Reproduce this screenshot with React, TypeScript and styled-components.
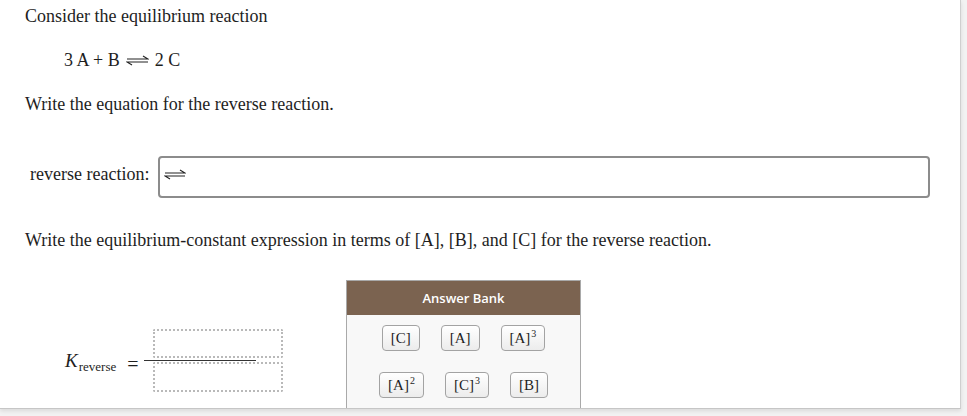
import React from "react";
import styled, { createGlobalStyle } from "styled-components";

const Global = createGlobalStyle`
  html, body { margin: 0; padding: 0; background: #f2f2f2; }
  body { font-family: "Liberation Serif", "Times New Roman", serif; color: #1e1e1e; }
`;

const Page = styled.div`
  width: 967px;
  height: 416px;
  overflow: hidden;
  background: #f2f2f2;
`;

const Card = styled.div`
  width: 961px;
  height: 409px;
  box-sizing: border-box;
  background: #fff;
  border-right: 1px solid #cfcfcf;
  border-bottom: 1px solid #c6c6c6;
  box-shadow: 0 2px 4px rgba(0, 0, 0, 0.1);
  overflow: hidden;
  padding: 6px 0 0 25px;
`;

const Para = styled.p<{ $mt: number }>`
  margin: ${(p) => p.$mt}px 0 0;
  font-size: 18px;
  line-height: 20px;
`;

const Equation = styled.div`
  margin: 24px 0 0 39px;
  display: flex;
  align-items: center;
  font-size: 18px;
  line-height: 20px;
  white-space: pre;
`;

const ArrowWrap = styled.span<{ $mx: number }>`
  display: inline-flex;
  margin: 0 ${(p) => p.$mx}px;
`;

const AnswerRow = styled.div`
  display: flex;
  align-items: flex-start;
  margin-top: 42px;
`;

const Label = styled.span`
  margin: 8px 0 0 5px;
  width: 128px;
  font-size: 18px;
  line-height: 20px;
`;

const InputBox = styled.div`
  width: 772px;
  height: 42px;
  box-sizing: border-box;
  border: 2px solid #8c8c8c;
  border-radius: 4px;
  display: flex;
  align-items: center;
  padding-left: 4px;
  padding-bottom: 5px;
`;

const BottomRow = styled.div`
  display: flex;
  align-items: flex-start;
  margin-top: 30px;
`;

const KGroup = styled.div`
  display: flex;
  align-items: center;
  margin: 49px 0 0 40px;
  width: 216px;
`;

const KLabel = styled.span`
  font-size: 19px;
  font-style: italic;
  line-height: 20px;
  white-space: nowrap;
  margin-top: 6px;
`;

const KSub = styled.sub`
  font-size: 13px;
  font-style: normal;
  vertical-align: -4px;
  margin-left: 1px;
`;

const Equals = styled.span`
  font-size: 20px;
  line-height: 20px;
  margin: 6px 5px 0 11px;
`;

const Fraction = styled.div`
  display: flex;
  flex-direction: column;
  align-items: flex-start;
  padding-left: 9px;
`;

const DropBox = styled.div<{ $h: number }>`
  width: 130px;
  height: ${(p) => p.$h}px;
  box-sizing: border-box;
  border: 2px dotted #b9b9b9;
  border-radius: 2px;
`;

const FracLine = styled.div`
  width: 112px;
  height: 1px;
  background: #333;
  margin: 2px 0 1px -9px;
`;

const Bank = styled.div`
  margin-left: 65px;
  width: 235px;
  box-sizing: border-box;
  border: 1px solid #a9a9a9;
  background: #f8f8f8;
  padding-bottom: 40px;
`;

const BankHeader = styled.div`
  height: 34px;
  background: #7b6350;
  color: #fff;
  font-family: "Open Sans", "Liberation Sans", sans-serif;
  font-weight: 600;
  font-size: 13px;
  display: flex;
  align-items: center;
  justify-content: center;
`;

const BankRows = styled.div`
  display: flex;
  flex-direction: column;
  gap: 21px;
  padding-top: 10px;
`;

const BankRow = styled.div`
  display: flex;
  justify-content: center;
  gap: 21px;
`;

const Chip = styled.div`
  height: 26px;
  box-sizing: border-box;
  padding: 0 8px;
  border: 1px solid #a3a3a3;
  border-radius: 4px;
  background: linear-gradient(#ffffff, #ececec);
  font-size: 15px;
  display: flex;
  align-items: center;
  white-space: nowrap;
`;

const ChipText = styled.span`
  line-height: 18px;
`;

const Sup = styled.sup`
  font-size: 10px;
  vertical-align: 6px;
  line-height: 0;
  margin-left: 1px;
`;

const Harpoons = ({ w, h }: { w: number; h: number }) => (
  <svg width={w} height={h} viewBox={`0 0 ${w} ${h}`} fill="none" stroke="#222" strokeWidth="1.1">
    <path d={`M1 ${h / 2 - 1.5} H${w - 1} L${w - 6} ${h / 2 - 4.5}`} />
    <path d={`M${w - 1} ${h / 2 + 1.5} H1 L6 ${h / 2 + 4.5}`} />
  </svg>
);

const chips1 = [
  { t: "[C]" },
  { t: "[A]" },
  { t: "[A]", s: "3" },
];
const chips2 = [
  { t: "[A]", s: "2" },
  { t: "[C]", s: "3" },
  { t: "[B]" },
];

const ChipRow = ({ items }: { items: { t: string; s?: string }[] }) => (
  <BankRow>
    {items.map((c, i) => (
      <Chip key={i}>
        <ChipText>
          {c.t}
          {c.s && <Sup>{c.s}</Sup>}
        </ChipText>
      </Chip>
    ))}
  </BankRow>
);

export default function App() {
  return (
    <Page>
      <Global />
      <Card>
        <Para $mt={0}>Consider the equilibrium reaction</Para>
        <Equation>
          <span>3 A + B</span>
          <ArrowWrap $mx={6}>
            <Harpoons w={23} h={11} />
          </ArrowWrap>
          <span>2 C</span>
        </Equation>
        <Para $mt={24}>Write the equation for the reverse reaction.</Para>
        <AnswerRow>
          <Label>reverse reaction:</Label>
          <InputBox>
            <Harpoons w={22} h={11} />
          </InputBox>
        </AnswerRow>
        <Para $mt={32}>
          Write the equilibrium-constant expression in terms of [A], [B], and [C] for the reverse reaction.
        </Para>
        <BottomRow>
          <KGroup>
            <KLabel>
              K<KSub>reverse</KSub>
            </KLabel>
            <Equals>=</Equals>
            <Fraction>
              <DropBox $h={29} />
              <FracLine />
              <DropBox $h={30} />
            </Fraction>
          </KGroup>
          <Bank>
            <BankHeader>Answer Bank</BankHeader>
            <BankRows>
              <ChipRow items={chips1} />
              <ChipRow items={chips2} />
            </BankRows>
          </Bank>
        </BottomRow>
      </Card>
    </Page>
  );
}
